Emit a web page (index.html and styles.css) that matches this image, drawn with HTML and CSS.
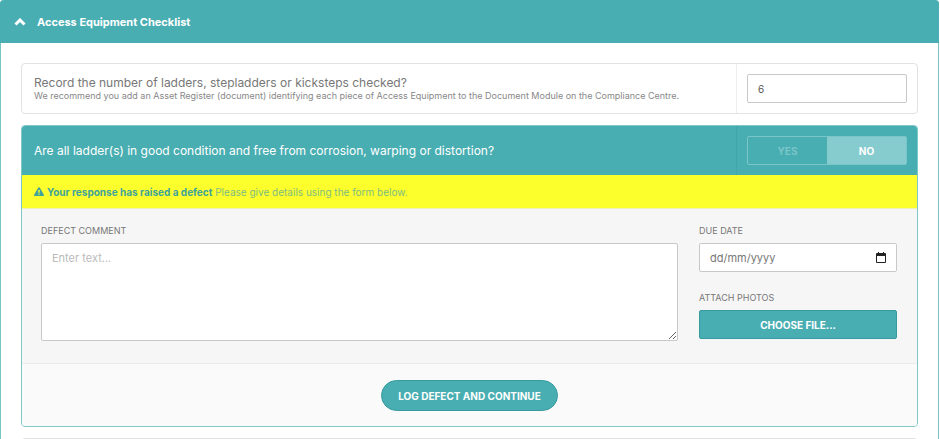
FILE: index.html
```html
<!DOCTYPE html>
<html lang="en-GB">
<head>
<meta charset="utf-8">
<meta name="viewport" content="width=device-width, initial-scale=1">
<title>Access Equipment Checklist</title>
<link rel="stylesheet" href="styles.css">
</head>
<body>
<section class="panel">
  <header class="panel-header">
    <svg class="chevron" viewBox="0 0 12 8" aria-hidden="true"><path d="M1.500 6.500 6 2l4.500 4.500"/></svg>
    <h1>Access Equipment Checklist</h1>
  </header>
  <form class="panel-body">
    <div class="card">
      <div class="row">
        <div class="question">
          <label class="title" for="count">Record the number of ladders, stepladders or kicksteps checked?</label>
          <p class="hint">We recommend you add an Asset Register (document) identifying each piece of Access Equipment to the Document Module on the Compliance Centre.</p>
        </div>
        <div class="answer"><input class="field" id="count" type="text" inputmode="numeric" value="6"></div>
      </div>
    </div>

    <div class="card active">
      <div class="row">
        <div class="question"><p class="title" id="condition">Are all ladder(s) in good condition and free from corrosion, warping or distortion?</p></div>
        <div class="answer">
          <div class="toggle" role="radiogroup" aria-labelledby="condition">
            <label><input type="radio" name="condition" value="yes">YES</label>
            <label><input type="radio" name="condition" value="no" checked>NO</label>
          </div>
        </div>
      </div>
      <div class="alert">
        <svg class="warning" viewBox="0 0 16 14" aria-hidden="true"><path fill-rule="evenodd" d="M7 .7a1.150 1.150 0 0 1 2 0l6.800 11.600A1.100 1.100 0 0 1 14.900 14H1.100a1.100 1.100 0 0 1-.9-1.700ZM6.700 4.500 7 9h2l.3-4.500ZM7 10.300v1.900h2v-1.900Z"/></svg>
        <p><strong>Your response has raised a defect</strong> Please give details using the form below.</p>
      </div>
      <div class="details">
        <div class="group comment">
          <label for="comment">DEFECT COMMENT</label>
          <textarea class="field" id="comment" placeholder="Enter text..."></textarea>
        </div>
        <div class="side">
          <div class="group">
            <label for="due">DUE DATE</label>
            <div class="field date">
              <input id="due" type="text" placeholder="dd/mm/yyyy">
              <button type="button" aria-label="Choose date"><svg viewBox="0 0 10 11" aria-hidden="true"><path fill-rule="evenodd" d="M1 1h1V0h1v1h4V0h1v1h1q1 0 1 1v8q0 1-1 1H1q-1 0-1-1V2q0-1 1-1Zm0 3v6h8V4Z"/></svg></button>
            </div>
          </div>
          <div class="group">
            <label for="photos">ATTACH PHOTOS</label>
            <button class="choose" id="photos" type="button">CHOOSE FILE...</button>
          </div>
        </div>
      </div>
      <footer class="actions"><button class="submit" type="button">LOG DEFECT AND CONTINUE</button></footer>
    </div>

    <div class="card"><div class="row"></div></div>
  </form>
</section>
</body>
</html>
```
FILE: styles.css
```css
:root {
  --teal: #49aeb2;
  --teal-dark: #369b9f;
  --line: #e2e2e2;
  --field-line: #c8c8c8;
}

* { box-sizing: border-box; }

body {
  height: 100vh;
  margin: 0;
  overflow: hidden;
  background: #fff;
  color: #777;
  font: 12px/16px Inter, "Open Sans", sans-serif;
}

h1, p { margin: 0; }

button, input, textarea { font: inherit; }

.panel {
  margin-right: 1px;
  border: 1px solid #79c4c7;
  border-top: 0;
  border-radius: 4px;
}

.panel-header {
  display: flex;
  align-items: center;
  gap: 11px;
  height: 43px;
  margin: 0 -1px;
  padding: 0 14px;
  border-radius: 4px 4px 0 0;
  background: var(--teal);
  color: #fff;
}

.panel-header h1 { font-size: 11px; font-weight: 700; line-height: 16px; }

.chevron {
  width: 12px;
  height: 8px;
  fill: none;
  stroke: currentColor;
  stroke-width: 3;
}

.panel-body {
  display: flex;
  flex-direction: column;
  gap: 11px;
  padding: 20px;
}

.card {
  border: 1px solid var(--line);
  border-radius: 4px;
  background: #fff;
  overflow: hidden;
}

.card.active { border-color: #7ec8c9; }

.row { display: flex; min-height: 49px; }

.active .row { background: var(--teal); color: #fff; }

.question {
  display: flex;
  flex: 1;
  flex-direction: column;
  justify-content: center;
  padding: 0 12px;
}

.title { font-size: 12px; line-height: 14px; }

.hint { color: #888; font-size: 9px; line-height: 12px; }

.answer {
  width: 181px;
  padding: 10px;
  border-left: 1px solid #eee;
}

.active .answer { border-color: #43a5a9; }

.field {
  display: block;
  width: 100%;
  height: 29px;
  padding: 0 10px;
  border: 1px solid var(--field-line);
  border-radius: 2px;
  background: #fff;
  color: #555;
  font-size: 11px;
}

.answer .field { font-size: 10px; }

.toggle {
  display: flex;
  height: 29px;
  border: 1px solid #7ac5c8;
  border-radius: 2px;
}

.toggle label {
  display: flex;
  flex: 1;
  align-items: center;
  justify-content: center;
  color: #7ac5c8;
  font-size: 10px;
  font-weight: 700;
}

.toggle label:has(:checked) { background: #86cccf; color: #fff; }

.toggle input { position: absolute; opacity: 0; }

.alert {
  display: flex;
  align-items: center;
  gap: 3px;
  height: 34px;
  padding: 0 12px;
  border-bottom: 1px solid #efefb8;
  background: #fdff2c;
  color: #80bc82;
  font-size: 10px;
}

.alert strong { color: #3fa39b; }

.warning { width: 10px; height: 9px; fill: #3fa39b; }

.details {
  display: flex;
  gap: 21px;
  padding: 14px 20px 22px 19px;
  border-bottom: 1px solid #ececec;
  background: #f6f6f6;
}

.comment { flex: 1; }

.side {
  display: flex;
  flex-direction: column;
  gap: 18px;
  width: 198px;
}

.group label {
  display: block;
  margin-bottom: 4px;
  font-size: 9px;
}

textarea.field {
  height: 98px;
  padding: 6px 10px;
  resize: vertical;
}

.field::placeholder { color: #bbb; }

.date { display: flex; align-items: center; }

.date input {
  flex: 1;
  min-width: 0;
  padding: 0;
  border: 0;
  outline: 0;
  background: none;
  color: #555;
}

.date input::placeholder { color: #777; }

.date button {
  display: flex;
  padding: 0;
  border: 0;
  background: none;
}

.date svg { width: 10px; height: 11px; fill: #222; }

.choose, .submit {
  border: 1px solid var(--teal-dark);
  background: var(--teal);
  color: #fff;
  font-size: 10px;
  font-weight: 700;
}

.choose { width: 100%; height: 29px; border-radius: 2px; }

.actions {
  display: flex;
  justify-content: center;
  padding: 16px 16px 15px;
  background: #fafafa;
}

.submit { height: 31px; padding: 0 16px; border-radius: 16px; }
```
